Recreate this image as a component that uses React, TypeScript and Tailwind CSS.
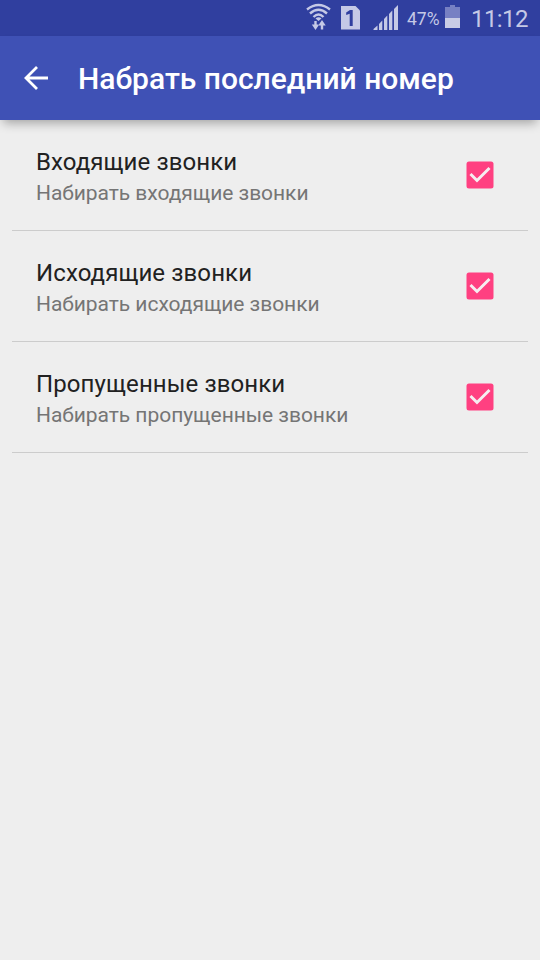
const rows = [
  { title: "Входящие звонки", sub: "Набирать входящие звонки" },
  { title: "Исходящие звонки", sub: "Набирать исходящие звонки" },
  { title: "Пропущенные звонки", sub: "Набирать пропущенные звонки" },
];

function StatusBar() {
  return (
    <div className="flex h-9 items-center bg-[#303f9f] text-[#c5c9e6]">
      <svg className="ml-[304px] h-9 w-[100px] shrink-0" viewBox="304 0 100 36" fill="none" stroke="currentColor">
        <path d="M307 9.500Q318.500 .5 330 9.500M310 13.500Q318.500 6 327 13.500M313.500 17Q318.500 12 323.500 17" strokeWidth="2.400" />
        <path d="M315.500 18.500q3-2.500 6 0l-3 2.500z" fill="currentColor" stroke="none" />
        <path d="M315.500 21v5M322 29.500v-6" strokeWidth="2.400" />
        <path d="M311.800 24.500h7.400l-3.700 5.500zM318.300 25.500h7.400l-3.700-5.500z" fill="currentColor" stroke="none" />
        <path d="M341 6h14.500l4.500 4.500v19h-19z" fill="currentColor" stroke="none" />
        <path d="M350 10h2.700v16h-3V13.800l-3.500 1.200v-2.500z" fill="#303f9f" stroke="none" />
        <path d="M373.500 30v-1l4-3.500V30zM379 30v-6l3.300-3.400V30zM384 30V19l3.300-3.400V30zM389 30V14l3.300-3.400V30zM394 30V9l4-4v25z" fill="currentColor" stroke="none" />
      </svg>
      <span className="ml-[3px] w-[33px] shrink-0 pt-[2px] text-[17.500px] tracking-[0px]">47%</span>
      <svg className="ml-[5px] h-9 w-[15px] shrink-0" viewBox="0 0 15 36">
        <path d="M5 5h5v2h5v11H0V7h5z" fill="#7780c3" />
        <path d="M0 18h15v10H0z" fill="#c9cce5" />
      </svg>
      <span className="ml-[11px] pt-[2px] text-[24px] tracking-[-0.6px]">11:12</span>
    </div>
  );
}

export default function App() {
  return (
    <main className="h-[960px] w-[540px] overflow-hidden bg-[#eeeeee] font-['Roboto','Noto_Sans',sans-serif]">
      <StatusBar />
      <header className="relative flex h-[84px] items-center bg-[#3f51b5] pl-6 text-white shadow-[0_6px_10px_-3px_rgba(0,0,0,0.32)]">
        <svg className="h-6 w-6" viewBox="0 0 24 24" fill="none" stroke="white" strokeWidth="2.800">
          <path d="M24 12H3M13 1L2 12l11 11" />
        </svg>
        <h1 className="ml-[30px] text-[30px] font-medium">Набрать последний номер</h1>
      </header>
      <ul className="px-3">
        {rows.map((row) => (
          <li key={row.title} className="flex h-[111px] items-center border-b border-[#cccccc] pl-6 pr-[34px]">
            <div className="flex-1 pt-[5px]">
              <div className="text-[24px] leading-[32px] tracking-[0.1px] text-[#212121]">{row.title}</div>
              <div className="text-[21px] leading-[31px] tracking-[-0.04px] text-[#757575]">{row.sub}</div>
            </div>
            <svg className="h-7 w-7" viewBox="0 0 28 28">
              <rect x="0.500" y="0.500" width="27" height="27" rx="2.500" fill="#ff4081" />
              <path d="M4.500 13l6.500 6.500L23.500 7" fill="none" stroke="#f6eef1" strokeWidth="3" />
            </svg>
          </li>
        ))}
      </ul>
    </main>
  );
}
